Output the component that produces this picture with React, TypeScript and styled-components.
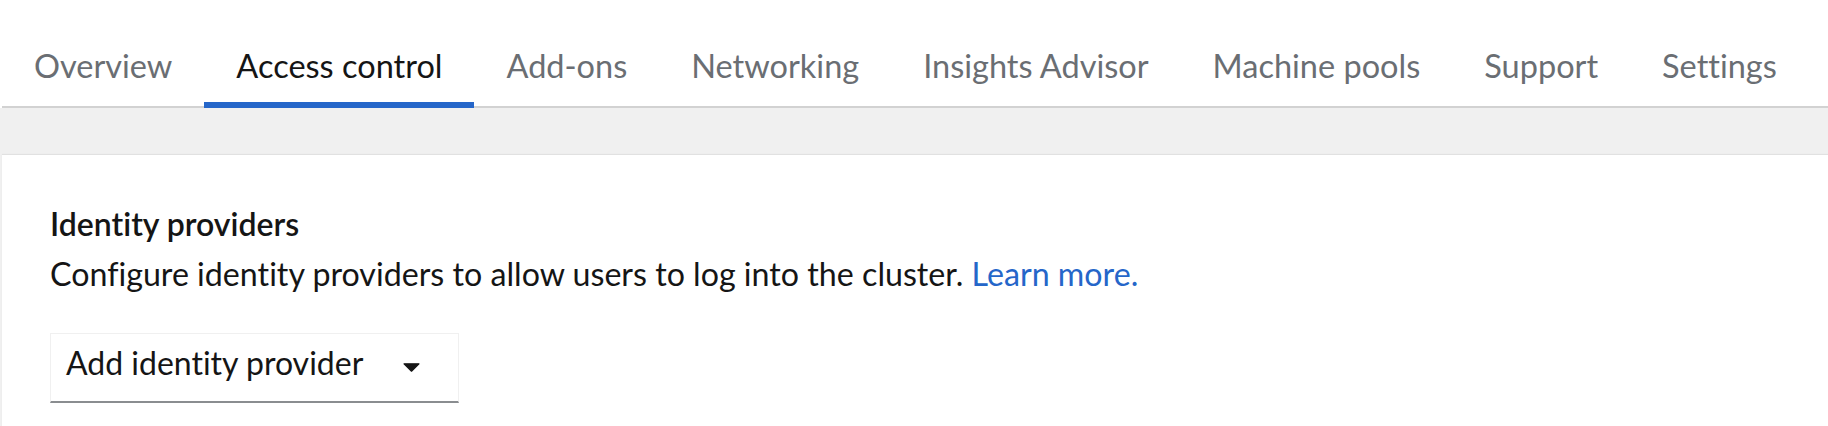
import styled, { createGlobalStyle } from "styled-components";

const GlobalStyle = createGlobalStyle`
  html, body {
    margin: 0;
    padding: 0;
    background: #ffffff;
  }
  body {
    font-family: Lato, "Open Sans", sans-serif;
    font-variant-ligatures: no-common-ligatures;
    color: #151515;
  }
  button {
    font-variant-ligatures: no-common-ligatures;
  }
`;

const tabs = [
  "Overview",
  "Access control",
  "Add-ons",
  "Networking",
  "Insights Advisor",
  "Machine pools",
  "Support",
  "Settings",
];

export default function App() {
  return (
    <Page>
      <GlobalStyle />
      <TabList>
        {tabs.map((t) => (
          <Tab key={t} $active={t === "Access control"}>
            {t}
          </Tab>
        ))}
      </TabList>
      <Band />
      <Card>
        <Title>Identity providers</Title>
        <Description>
          Configure identity providers to allow users to log into the cluster.{" "}
          <Link href="#">Learn more.</Link>
        </Description>
        <Toggle>
          <span>Add identity provider</span>
          <Caret width="17" height="9" viewBox="0 0 17 9">
            <path
              d="M1 0.8 H16 L8.5 8.2 Z"
              fill="#151515"
              stroke="#151515"
              strokeWidth="1.2"
              strokeLinejoin="round"
            />
          </Caret>
        </Toggle>
      </Card>
    </Page>
  );
}

const Page = styled.div`
  width: 1828px;
  height: 426px;
  overflow: hidden;
  background: #f0f0f0;
`;

const TabList = styled.div`
  display: flex;
  background: #ffffff;
  padding-left: 2px;
  position: relative;
  &::before {
    content: "";
    position: absolute;
    left: 2px;
    right: 0;
    bottom: 0;
    height: 2px;
    background: #d2d2d2;
  }
`;

const Tab = styled.button<{ $active?: boolean }>`
  position: relative;
  border: none;
  background: transparent;
  font-family: Lato, "Open Sans", sans-serif;
  font-size: 32.5px;
  line-height: 39px;
  padding: 46px 32px 23px;
  color: ${(p) => (p.$active ? "#151515" : "#6a6e73")};
  white-space: nowrap;
  cursor: pointer;
  &::after {
    content: "";
    position: absolute;
    left: 0;
    right: 0;
    bottom: 0;
    height: 6px;
    background: ${(p) => (p.$active ? "#2566c9" : "transparent")};
    z-index: 1;
  }
`;

const Band = styled.div`
  height: 47px;
  background: #f0f0f0;
`;

const Card = styled.div`
  margin-left: 2px;
  background: #ffffff;
  box-shadow: 0 -1px 1px rgba(3, 3, 3, 0.06);
  padding: 50px 48px 40px;
  height: 300px;
`;

const Title = styled.h2`
  margin: 0;
  font-size: 32px;
  line-height: 38px;
  font-weight: 600;
  color: #151515;
`;

const Description = styled.p`
  margin: 12px 0 0;
  font-size: 32.2px;
  line-height: 38px;
  color: #151515;
`;

const Link = styled.a`
  color: #2566c9;
  text-decoration: none;
`;

const Toggle = styled.button`
  margin-top: 40px;
  display: flex;
  align-items: center;
  gap: 40px;
  height: 70px;
  box-sizing: border-box;
  padding: 0 38px 10px 15px;
  background: #ffffff;
  border: 1px solid #f0f0f0;
  border-bottom: 2px solid #8a8d90;
  font-family: Lato, "Open Sans", sans-serif;
  font-size: 32px;
  line-height: 38px;
  color: #151515;
  white-space: nowrap;
  cursor: pointer;
`;

const Caret = styled.svg`
  flex: none;
  margin-top: 10px;
`;
